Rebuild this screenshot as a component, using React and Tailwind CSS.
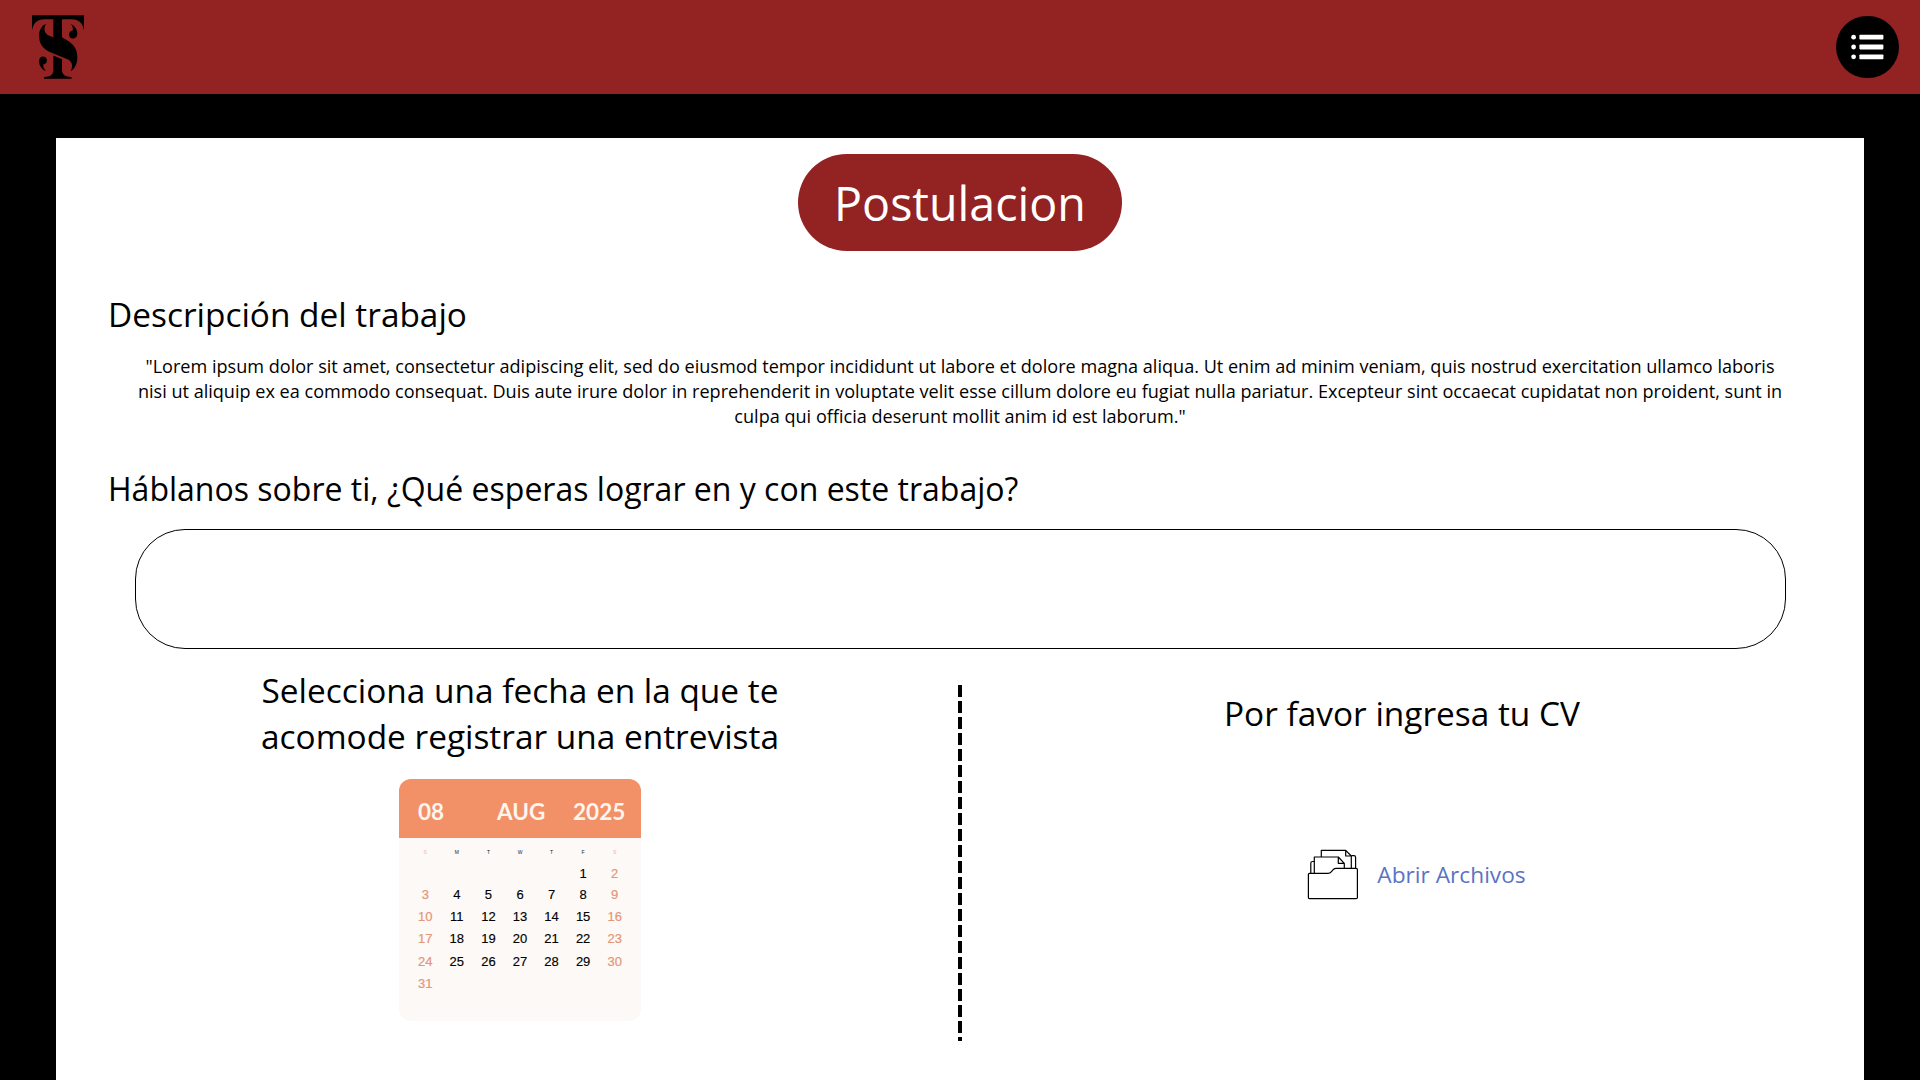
import React from "react";

const WEEKDAYS = ["S", "M", "T", "W", "T", "F", "S"];
const FIRST_DAY_OFFSET = 5;
const DAYS = [
  ...Array(FIRST_DAY_OFFSET).fill(null),
  ...Array.from({ length: 31 }, (_, i) => i + 1),
];

function Logo() {
  return (
    <svg viewBox="96 46 156 191" className="h-16 w-[52px]" fill="#000" aria-label="TS">
      <path d="M96 46H252V92C248 70 238 58 214 58H186V112L208 126C224 137 232 152 232 172C232 192 224 206 212 214C219 200 218 186 204 179L146 155C126 145 117 128 117 108C117 92 124 79 138 72C130 86 132 100 146 107L160 112V58H134C110 58 100 70 96 92Z" />
      <path d="M160 167L186 178V212C187 225 195 230 215 232V237H132V232C152 230 159 225 160 212Z" />
      <path d="M212 72C225 79 232 90 232 101C232 110 226 116 218 116C211 116 207 111 207 104C207 97 212 93 218 92C220 85 217 78 212 72Z" />
      <path d="M138 214C125 208 117 196 117 184C117 175 122 170 129 170C136 170 141 175 141 182C141 189 136 193 130 194C129 201 132 208 138 214Z" />
    </svg>
  );
}

function MenuButton() {
  return (
    <button className="flex size-[62.5px] items-center justify-center rounded-full bg-black" aria-label="Menu">
      <svg viewBox="0 0 33 26" className="h-[26px] w-[33px]" fill="#fff">
        <circle cx="2.6" cy="3.2" r="2.4" />
        <circle cx="2.6" cy="13" r="2.4" />
        <circle cx="2.6" cy="22.8" r="2.4" />
        <rect x="8.4" y="0.8" width="24" height="4.8" rx="0.8" />
        <rect x="8.4" y="10.6" width="24" height="4.8" rx="0.8" />
        <rect x="8.4" y="20.4" width="24" height="4.8" rx="0.8" />
      </svg>
    </button>
  );
}

function FolderIcon() {
  return (
    <svg
      viewBox="0 0 54 53"
      className="h-[53px] w-[54px]"
      fill="none"
      stroke="#000"
      strokeWidth="1.2"
      strokeLinejoin="round"
    >
      <path d="M15.3 9V2.3H39.7L45.3 8V20.3M39.7 2.3V8H45.3" />
      <path d="M45.3 7.6H48Q49.6 7.6 49.6 9.4V20.3" />
      <path d="M8.3 25.3V9H32.3L38.3 15.3V20.3M32.3 9V15.3H38.3" />
      <path d="M8.3 13.5H6.6Q4.8 13.5 4.8 15.3V25.3" />
      <path d="M3.6 25.3H22Q24 25.3 25.2 23.8L27.2 21.6Q28.4 20.3 30.2 20.3H50.2Q51.4 20.3 51.4 21.5V49.5Q51.4 50.7 50.2 50.7H3.6Q2.4 50.7 2.4 49.5V26.5Q2.4 25.3 3.6 25.3Z" />
    </svg>
  );
}

function Calendar() {
  return (
    <div className="h-[242px] w-[242px] overflow-hidden rounded-xl bg-[#fdf9f6]">
      <div className="grid h-[59px] grid-cols-[80px_1fr_80px] items-center bg-[#f29067] px-[18px] pt-2 font-['Lato'] text-[22.5px] leading-7 font-bold text-[#fdf5ee]">
        <span className="pl-px">08</span>
        <span>AUG</span>
        <span className="text-right">2025</span>
      </div>
      <div className="ml-[10.5px] grid w-[221px] grid-cols-7 pt-2 text-center font-['Liberation_Sans'] text-[5px] leading-[12px]">
        {WEEKDAYS.map((d, i) => (
          <span key={i} className={i % 6 === 0 ? "text-[#f0b49c]" : "text-[#222]"}>
            {d}
          </span>
        ))}
      </div>
      <div className="mt-1.5 ml-[10.5px] grid w-[221px] grid-cols-7 grid-rows-[21px_21px_22px_22.5px_22.5px_22px] items-center text-center font-['Liberation_Sans'] text-[13px] leading-4">
        {DAYS.map((d, i) => (
          <span
            key={i}
            className={
              i % 7 === 0 || i % 7 === 6
                ? "text-[#e39678] [-webkit-text-stroke:0.2px_#e39678]"
                : "text-black [-webkit-text-stroke:0.15px_#000]"
            }
          >
            {d}
          </span>
        ))}
      </div>
    </div>
  );
}

export default function App() {
  return (
    <div className="flex h-[1080px] w-[1920px] flex-col overflow-hidden bg-black font-['Open_Sans',sans-serif] text-black">
      <header className="flex h-[93.5px] shrink-0 items-center justify-between bg-[#932222] pr-[21.5px] pl-8">
        <Logo />
        <MenuButton />
      </header>

      <main className="mx-14 mt-[44.5px] flex flex-1 flex-col bg-white pt-4">
        <h1 className="flex h-[97px] w-[324px] items-center justify-center self-center rounded-full bg-[#932222] text-[46.6px] leading-[64px] text-white">
          Postulacion
        </h1>

        <h2 className="mt-10 ml-[52px] text-[33.4px] leading-[46px]">Descripción del trabajo</h2>
        <p className="mt-[17px] text-center text-[18.08px] leading-[25.1px] whitespace-nowrap">
          "Lorem ipsum dolor sit amet, consectetur adipiscing elit, sed do eiusmod tempor incididunt ut labore et dolore magna aliqua. Ut enim ad minim veniam, quis nostrud exercitation ullamco laboris
          <br />
          nisi ut aliquip ex ea commodo consequat. Duis aute irure dolor in reprehenderit in voluptate velit esse cillum dolore eu fugiat nulla pariatur. Excepteur sint occaecat cupidatat non proident, sunt in
          <br />
          culpa qui officia deserunt mollit anim id est laborum."
        </p>

        <h2 className="mt-[37.7px] ml-[52px] text-[32.03px] leading-[44px]">
          Háblanos sobre ti, ¿Qué esperas lograr en y con este trabajo?
        </h2>
        <textarea className="mt-[18px] h-[120px] w-[1651px] shrink-0 resize-none self-center rounded-[50px] border border-black px-10 py-6 text-lg outline-none" />

        <div className="flex flex-1 pt-[18px]">
          <section className="flex w-[902px] flex-col items-center pl-[26px]">
            <h2 className="text-center text-[33.4px] leading-[46px]">
              Selecciona una fecha en la que te
              <br />
              acomode registrar una entrevista
            </h2>
            <div className="mt-5">
              <Calendar />
            </div>
          </section>

          <div className="mt-[18px] h-[356px] w-1 bg-[repeating-linear-gradient(to_bottom,#000_0_12px,transparent_12px_16px)]" />

          <section className="flex flex-1 flex-col items-center pt-[23px]">
            <h2 className="mr-[22px] text-[33.4px] leading-[46px]">Por favor ingresa tu CV</h2>
            <button className="mt-28 mr-[-6px] flex items-center gap-[17px]">
              <FolderIcon />
              <span className="text-[22.7px] leading-[31px] text-[#5b73c4]">Abrir Archivos</span>
            </button>
          </section>
        </div>
      </main>
    </div>
  );
}
